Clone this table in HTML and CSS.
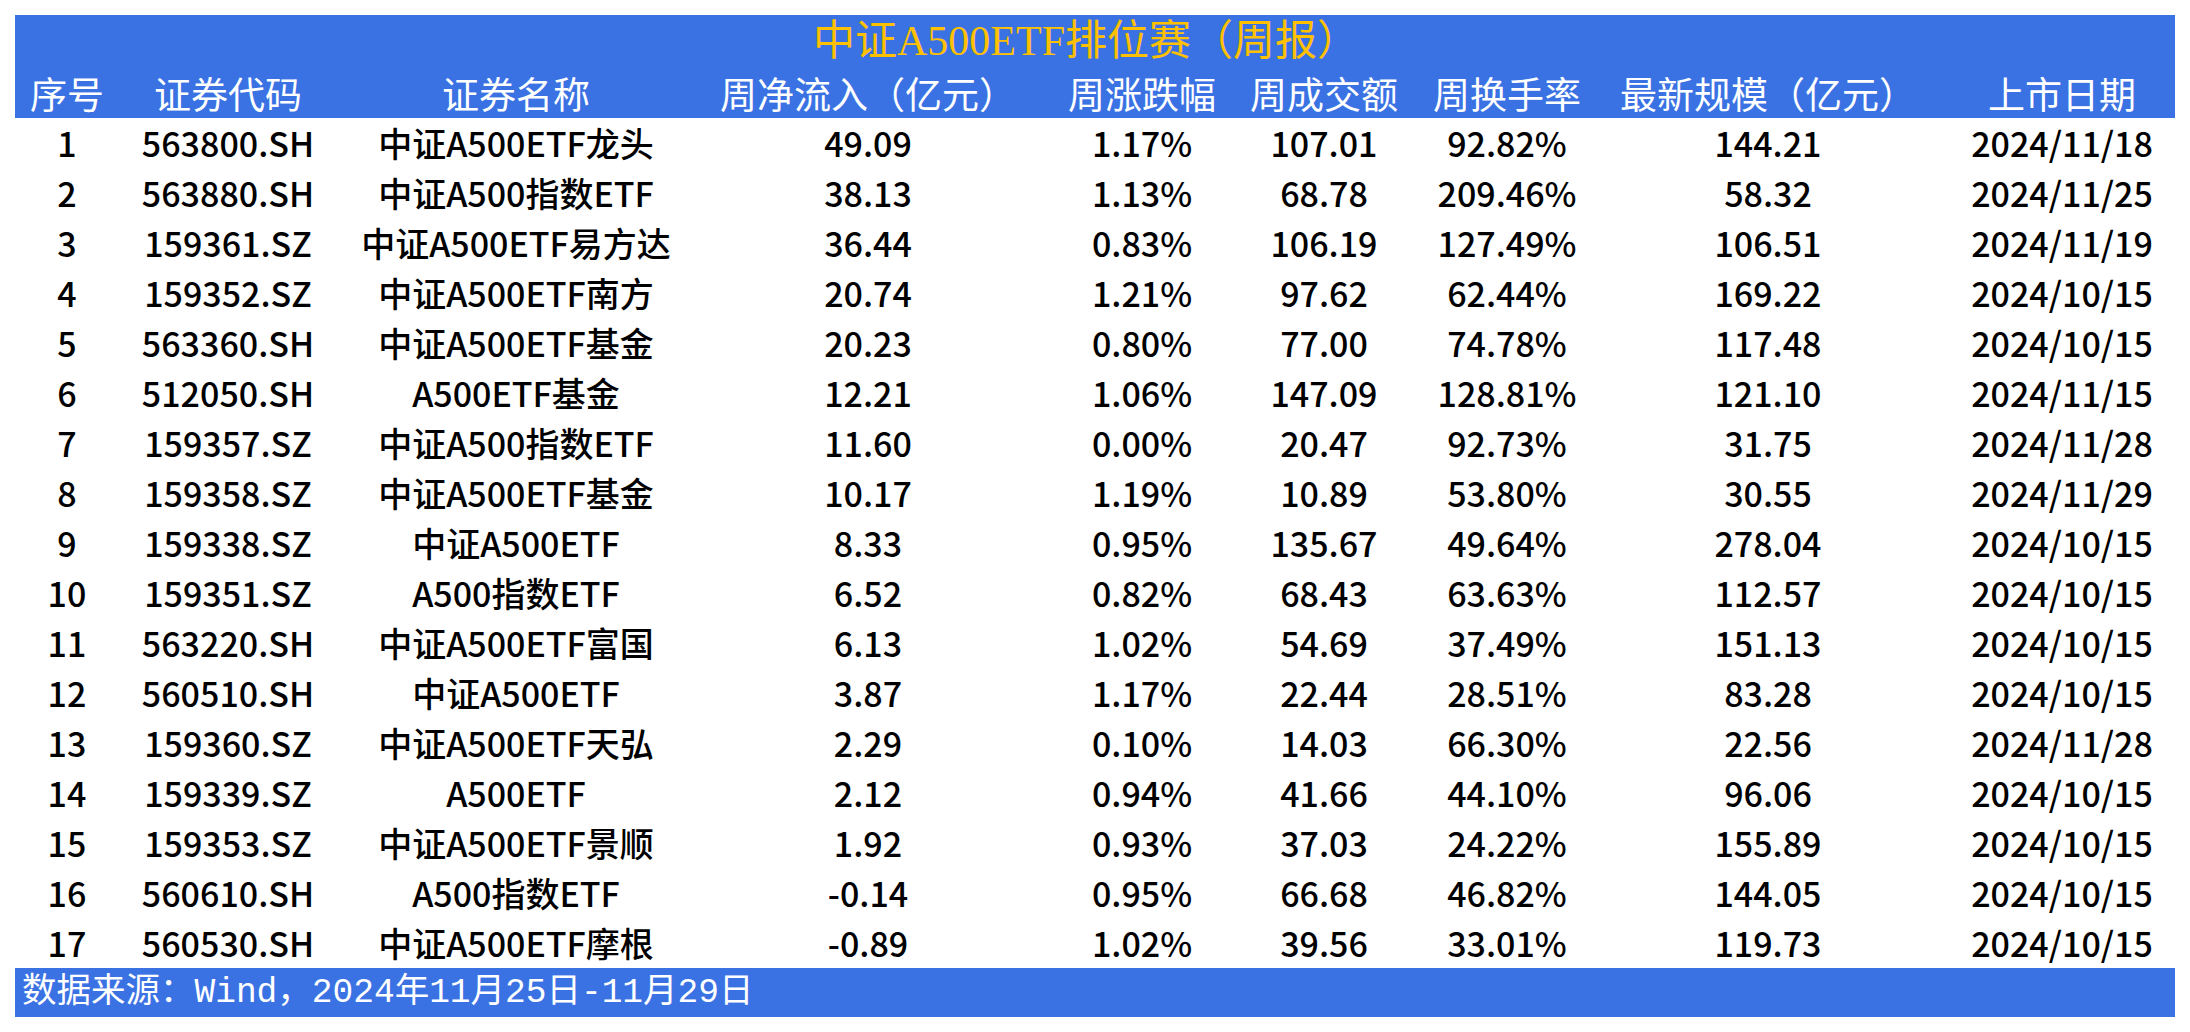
FILE: index.html
```html
<!DOCTYPE html>
<html lang="zh-CN">
<head>
<meta charset="utf-8">
<title>中证A500ETF排位赛（周报）</title>
<link rel="stylesheet" href="styles.css">
</head>
<body>
<div class="sheet">
  <div class="banner">
    <div class="title">中证A500ETF排位赛（周报）</div>
    <div class="row head">
      <div>序号</div><div>证券代码</div><div>证券名称</div><div>周净流入（亿元）</div><div>周涨跌幅</div><div>周成交额</div><div>周换手率</div><div>最新规模（亿元）</div><div class="last">上市日期</div>
    </div>
  </div>
  <div class="body">
    <div class="row"><div>1</div><div>563800.SH</div><div>中证A500ETF龙头</div><div>49.09</div><div>1.17%</div><div>107.01</div><div>92.82%</div><div>144.21</div><div class="last">2024/11/18</div></div>
    <div class="row"><div>2</div><div>563880.SH</div><div>中证A500指数ETF</div><div>38.13</div><div>1.13%</div><div>68.78</div><div>209.46%</div><div>58.32</div><div class="last">2024/11/25</div></div>
    <div class="row"><div>3</div><div>159361.SZ</div><div>中证A500ETF易方达</div><div>36.44</div><div>0.83%</div><div>106.19</div><div>127.49%</div><div>106.51</div><div class="last">2024/11/19</div></div>
    <div class="row"><div>4</div><div>159352.SZ</div><div>中证A500ETF南方</div><div>20.74</div><div>1.21%</div><div>97.62</div><div>62.44%</div><div>169.22</div><div class="last">2024/10/15</div></div>
    <div class="row"><div>5</div><div>563360.SH</div><div>中证A500ETF基金</div><div>20.23</div><div>0.80%</div><div>77.00</div><div>74.78%</div><div>117.48</div><div class="last">2024/10/15</div></div>
    <div class="row"><div>6</div><div>512050.SH</div><div>A500ETF基金</div><div>12.21</div><div>1.06%</div><div>147.09</div><div>128.81%</div><div>121.10</div><div class="last">2024/11/15</div></div>
    <div class="row"><div>7</div><div>159357.SZ</div><div>中证A500指数ETF</div><div>11.60</div><div>0.00%</div><div>20.47</div><div>92.73%</div><div>31.75</div><div class="last">2024/11/28</div></div>
    <div class="row"><div>8</div><div>159358.SZ</div><div>中证A500ETF基金</div><div>10.17</div><div>1.19%</div><div>10.89</div><div>53.80%</div><div>30.55</div><div class="last">2024/11/29</div></div>
    <div class="row"><div>9</div><div>159338.SZ</div><div>中证A500ETF</div><div>8.33</div><div>0.95%</div><div>135.67</div><div>49.64%</div><div>278.04</div><div class="last">2024/10/15</div></div>
    <div class="row"><div>10</div><div>159351.SZ</div><div>A500指数ETF</div><div>6.52</div><div>0.82%</div><div>68.43</div><div>63.63%</div><div>112.57</div><div class="last">2024/10/15</div></div>
    <div class="row"><div>11</div><div>563220.SH</div><div>中证A500ETF富国</div><div>6.13</div><div>1.02%</div><div>54.69</div><div>37.49%</div><div>151.13</div><div class="last">2024/10/15</div></div>
    <div class="row"><div>12</div><div>560510.SH</div><div>中证A500ETF</div><div>3.87</div><div>1.17%</div><div>22.44</div><div>28.51%</div><div>83.28</div><div class="last">2024/10/15</div></div>
    <div class="row"><div>13</div><div>159360.SZ</div><div>中证A500ETF天弘</div><div>2.29</div><div>0.10%</div><div>14.03</div><div>66.30%</div><div>22.56</div><div class="last">2024/11/28</div></div>
    <div class="row"><div>14</div><div>159339.SZ</div><div>A500ETF</div><div>2.12</div><div>0.94%</div><div>41.66</div><div>44.10%</div><div>96.06</div><div class="last">2024/10/15</div></div>
    <div class="row"><div>15</div><div>159353.SZ</div><div>中证A500ETF景顺</div><div>1.92</div><div>0.93%</div><div>37.03</div><div>24.22%</div><div>155.89</div><div class="last">2024/10/15</div></div>
    <div class="row"><div>16</div><div>560610.SH</div><div>A500指数ETF</div><div>-0.14</div><div>0.95%</div><div>66.68</div><div>46.82%</div><div>144.05</div><div class="last">2024/10/15</div></div>
    <div class="row"><div>17</div><div>560530.SH</div><div>中证A500ETF摩根</div><div>-0.89</div><div>1.02%</div><div>39.56</div><div>33.01%</div><div>119.73</div><div class="last">2024/10/15</div></div>
  </div>
  <div class="footer">数据来源：Wind，2024年11月25日-11月29日</div>
</div>
</body>
</html>
```
FILE: styles.css
```css
html, body {
  margin: 0;
  padding: 0;
  background: #ffffff;
}

.sheet {
  width: 2160px;
  padding: 15px 15px 0 15px;
  font-family: "Noto Sans CJK SC", sans-serif;
}

.banner {
  background: #3a72e4;
}

.title {
  height: 53px;
  line-height: 53px;
  text-align: center;
  padding-right: 18px;
  color: #ffc000;
  font-family: "Liberation Serif", "Noto Sans CJK SC", serif;
  font-size: 42px;
}

.row {
  display: grid;
  grid-template-columns: 104px 218px 358px 346px 202px 162px 204px 318px 248px;
  height: 50px;
  align-items: center;
  text-align: center;
  white-space: nowrap;
}

.row > .last {
  padding-left: 22px;
}

.head {
  color: #ffffff;
  font-size: 37px;
  font-weight: 400;
  line-height: 50px;
}

.body .row {
  color: #000000;
  font-size: 34px;
  font-weight: 500;
  line-height: 50px;
}

.footer {
  background: #3a72e4;
  height: 49px;
  line-height: 49px;
  padding-left: 7px;
  color: #ffffff;
  font-family: "Liberation Mono", "Noto Sans CJK SC", monospace;
  font-size: 34.5px;
  white-space: nowrap;
}
```
